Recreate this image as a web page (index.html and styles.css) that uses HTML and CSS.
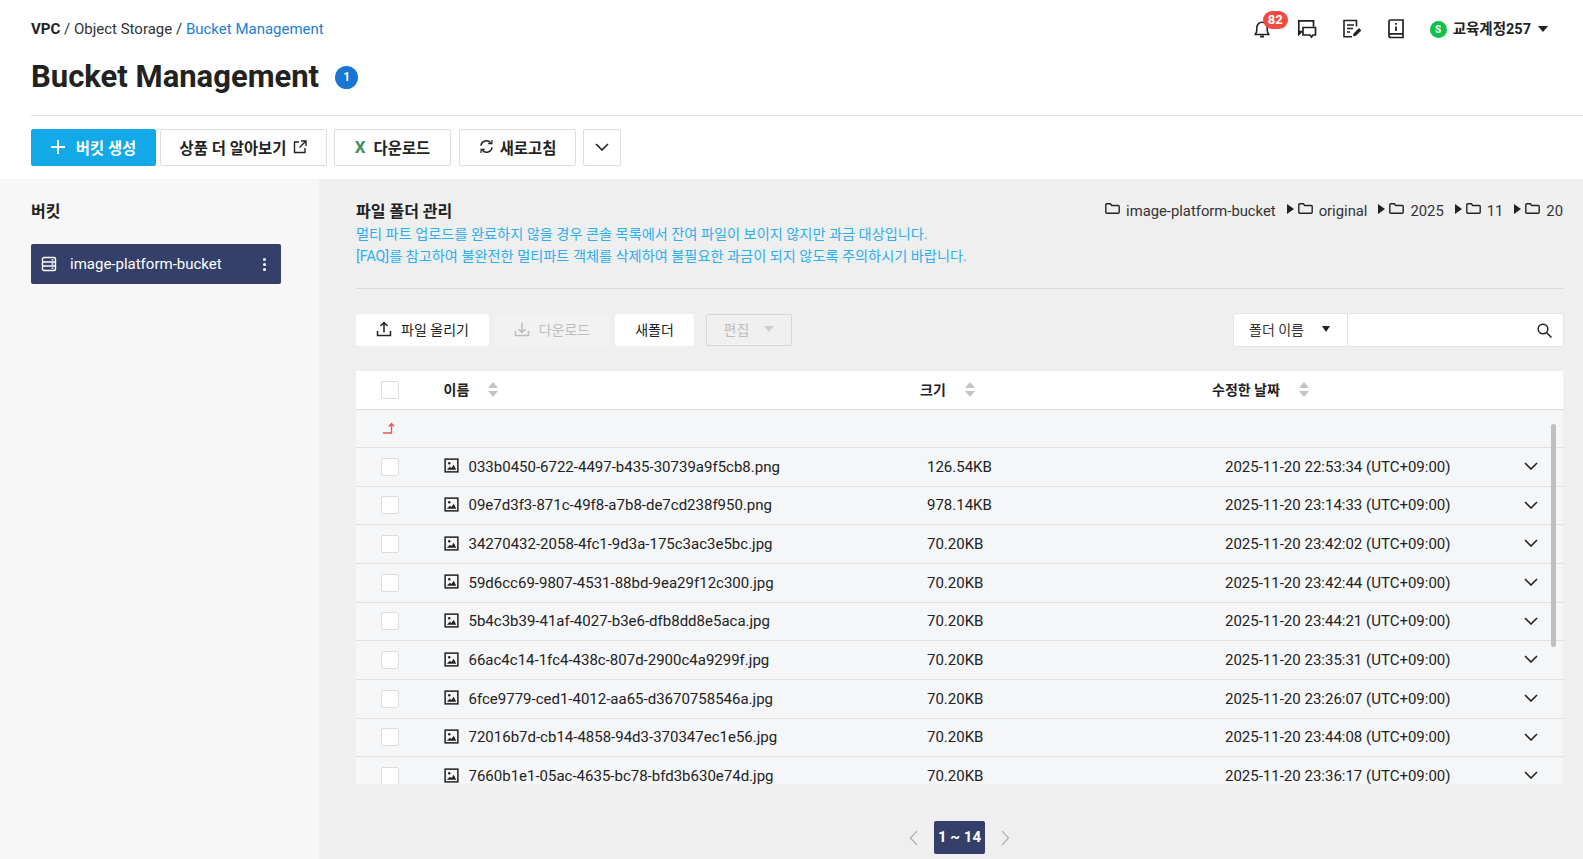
FILE: index.html
```html
<!DOCTYPE html>
<html lang="ko">
<head>
    <meta charset="UTF-8">
    <title>Bucket Management</title>
    <link rel="stylesheet" href="styles.css">
</head>
<body>
    <!-- icon sprite -->
    <svg class="sprite" width="0" height="0">
        <symbol id="i-folder" viewBox="0 0 15 12"><path d="M.8 1.800c0-.6.4-1 1-1h3.600l1.300 1.700h6.500c.6 0 1 .4 1 1v5.700c0 .6-.4 1-1 1H1.800c-.6 0-1-.4-1-1z" fill="none" stroke="currentColor" stroke-width="1.400"/></symbol>
        <symbol id="i-image" viewBox="0 0 16 16"><rect x="1.200" y="1.200" width="13.600" height="13.600" fill="none" stroke="currentColor" stroke-width="1.600"/><circle cx="5.600" cy="5.600" r="1.300" fill="currentColor"/><path d="M3 12.600l3.200-3.400 1.700 1.500 2.500-3.400 2.600 5.300z" fill="currentColor"/></symbol>
        <symbol id="i-chev" viewBox="0 0 14 8"><path d="M1 1l6 6 6-6" fill="none" stroke="currentColor" stroke-width="1.600"/></symbol>
        <symbol id="i-sort" viewBox="0 0 10 15"><path d="M5 0l5 6H0zM5 15L0 9h10z" fill="currentColor"/></symbol>
    </svg>

    <header class="page-head">
        <div class="top-row">
            <nav class="crumbs"><b>VPC</b> / Object Storage / <span class="crumb-on">Bucket Management</span></nav>
            <div class="user-tools">
                <span class="tool tool-bell">
                    <svg width="20" height="20" viewBox="0 0 20 20"><path d="M3 15.500c1.200-1 1.800-2.200 1.800-4.500V8.500a5.200 5.200 0 0 1 10.400 0V11c0 2.300.6 3.500 1.800 4.500z" fill="none" stroke="#222" stroke-width="1.600" stroke-linejoin="round"/><path d="M8 17.500h4" stroke="#222" stroke-width="2"/></svg>
                    <span class="bell-count">82</span>
                </span>
                <span class="tool">
                    <svg width="20" height="20" viewBox="0 0 20 20"><path d="M5 12.500H1.800V1.800h14.700v6" fill="none" stroke="#222" stroke-width="1.700"/><path d="M6 8.500h12.500v7.500h-2.500l-1.500 2-1.500-2H6zM1.800 12.500v3l3-3" fill="none" stroke="#222" stroke-width="1.700"/></svg>
                </span>
                <span class="tool">
                    <svg width="20" height="20" viewBox="0 0 20 20"><path d="M10 17.800H2V1.500h12.500v6" fill="none" stroke="#222" stroke-width="1.600"/><path d="M5 6h7M5 9.500h6M5 13h3" stroke="#222" stroke-width="1.500"/><path d="M11 17.500l.6-3 5.400-5.400 2.300 2.300-5.400 5.400z" fill="#222"/></svg>
                </span>
                <span class="tool">
                    <svg width="16" height="20" viewBox="0 0 16 20"><path d="M1 16.500V2.500C1 1.600 1.600 1 2.500 1H15v17.500H2.800C1.700 18.500 1 17.600 1 16.500c0-1 .7-1.700 1.800-1.700H15" fill="none" stroke="#222" stroke-width="1.700"/><path d="M8 4v1.800M8 7.500V12" stroke="#222" stroke-width="1.800"/></svg>
                </span>
                <span class="user">
                    <span class="avatar">S</span>
                    <span class="user-name">교육계정257</span>
                    <span class="caret"></span>
                </span>
            </div>
        </div>
        <div class="title-row">
            <h1>Bucket Management</h1>
            <span class="title-badge">1</span>
        </div>
        <div class="actions">
            <button class="btn btn-main">
                <svg width="14" height="14" viewBox="0 0 14 14"><path d="M7 0v14M0 7h14" stroke="#fff" stroke-width="2"/></svg>
                버킷 생성
            </button>
            <button class="btn btn-more">
                상품 더 알아보기
                <svg width="14" height="14" viewBox="0 0 14 14"><path d="M6 2H1.500v10.500H12V8M8 1h5v5M13 1L6.500 7.500" fill="none" stroke="#222" stroke-width="1.400"/></svg>
            </button>
            <button class="btn btn-down"><span class="x-mark">X</span>다운로드</button>
            <button class="btn btn-reload">
                <svg width="15" height="15" viewBox="0 0 16 16"><path d="M2 7a6 6 0 0 1 10.500-3M14 9a6 6 0 0 1-10.500 3" fill="none" stroke="#222" stroke-width="1.500"/><path d="M13.800 1v4h-4M2.200 15v-4h4" fill="none" stroke="#222" stroke-width="1.300"/></svg>
                새로고침
            </button>
            <button class="btn btn-open"><svg width="14" height="8"><use href="#i-chev"/></svg></button>
        </div>
    </header>

    <div class="content">
        <aside class="side">
            <h2>버킷</h2>
            <div class="bucket">
                <svg width="16" height="16" viewBox="0 0 16 16"><rect x="1.500" y="1.500" width="13" height="13" rx="1.500" fill="none" stroke="#fff" stroke-width="1.400"/><path d="M1.500 6h13M1.500 10h13M10.500 3.800h2M10.500 8h2M10.500 12.200h2" stroke="#fff" stroke-width="1.300"/></svg>
                <span class="bucket-name">image-platform-bucket</span>
                <span class="dots"><i></i><i></i><i></i></span>
            </div>
        </aside>

        <main class="main">
            <div class="main-head">
                <div>
                    <h2>파일 폴더 관리</h2>
                    <p class="notice">멀티 파트 업로드를 완료하지 않을 경우 콘솔 목록에서 잔여 파일이 보이지 않지만 과금 대상입니다.<br>[FAQ]를 참고하여 불완전한 멀티파트 객체를 삭제하여 불필요한 과금이 되지 않도록 주의하시기 바랍니다.</p>
                </div>
                <div class="path">
                    <span class="path-item"><svg width="15" height="12"><use href="#i-folder"/></svg>image-platform-bucket</span>
                    <span class="path-arrow"></span>
                    <span class="path-item"><svg width="15" height="12"><use href="#i-folder"/></svg>original</span>
                    <span class="path-arrow"></span>
                    <span class="path-item"><svg width="15" height="12"><use href="#i-folder"/></svg>2025</span>
                    <span class="path-arrow"></span>
                    <span class="path-item"><svg width="15" height="12"><use href="#i-folder"/></svg>11</span>
                    <span class="path-arrow"></span>
                    <span class="path-item"><svg width="15" height="12"><use href="#i-folder"/></svg>20</span>
                </div>
            </div>

            <div class="file-bar">
                <button class="fbtn fbtn-up">
                    <svg width="16" height="16" viewBox="0 0 16 16"><path d="M1.500 10v4.500h13V10M8 11.500V2M4.500 5L8 1.500 11.500 5" fill="none" stroke="#222" stroke-width="1.500"/></svg>
                    파일 올리기
                </button>
                <button class="fbtn fbtn-off">
                    <svg width="16" height="16" viewBox="0 0 16 16"><path d="M1.500 10v4.500h13V10M8 1.500V11M4.500 8L8 11.500 11.500 8" fill="none" stroke="#bdbdbd" stroke-width="1.500"/></svg>
                    다운로드
                </button>
                <button class="fbtn fbtn-new">새폴더</button>
                <button class="fbtn-edit">편집<span class="caret caret-off"></span></button>
                <div class="search">
                    <span class="search-type">폴더 이름<span class="caret"></span></span>
                    <span class="search-box">
                        <svg width="15" height="15" viewBox="0 0 15 15"><circle cx="6" cy="6" r="4.800" fill="none" stroke="#222" stroke-width="1.500"/><path d="M9.500 9.500L14.500 14.500" stroke="#222" stroke-width="1.500"/></svg>
                    </span>
                </div>
            </div>

            <div class="table">
                <div class="row row-head">
                    <span class="check"></span>
                    <span class="th">이름<svg width="10" height="15"><use href="#i-sort"/></svg></span>
                    <span class="th">크기<svg width="10" height="15"><use href="#i-sort"/></svg></span>
                    <span class="th">수정한 날짜<svg width="10" height="15"><use href="#i-sort"/></svg></span>
                </div>
                <div class="table-body">
                    <div class="row row-up">
                        <svg class="up-icon" width="12" height="12" viewBox="0 0 12 12"><path d="M0 11h8.500V2M6 4.500L8.500 1.500 11 4.500" fill="none" stroke="#f0524a" stroke-width="1.300"/></svg>
                    </div>
                    <div class="row">
                        <span class="check"></span>
                        <span class="file"><svg width="15" height="15"><use href="#i-image"/></svg>033b0450-6722-4497-b435-30739a9f5cb8.png</span>
                        <span class="size">126.54KB</span>
                        <span class="date">2025-11-20 22:53:34 (UTC+09:00)</span>
                        <svg class="row-open" width="14" height="8"><use href="#i-chev"/></svg>
                    </div>
                    <div class="row">
                        <span class="check"></span>
                        <span class="file"><svg width="15" height="15"><use href="#i-image"/></svg>09e7d3f3-871c-49f8-a7b8-de7cd238f950.png</span>
                        <span class="size">978.14KB</span>
                        <span class="date">2025-11-20 23:14:33 (UTC+09:00)</span>
                        <svg class="row-open" width="14" height="8"><use href="#i-chev"/></svg>
                    </div>
                    <div class="row">
                        <span class="check"></span>
                        <span class="file"><svg width="15" height="15"><use href="#i-image"/></svg>34270432-2058-4fc1-9d3a-175c3ac3e5bc.jpg</span>
                        <span class="size">70.20KB</span>
                        <span class="date">2025-11-20 23:42:02 (UTC+09:00)</span>
                        <svg class="row-open" width="14" height="8"><use href="#i-chev"/></svg>
                    </div>
                    <div class="row">
                        <span class="check"></span>
                        <span class="file"><svg width="15" height="15"><use href="#i-image"/></svg>59d6cc69-9807-4531-88bd-9ea29f12c300.jpg</span>
                        <span class="size">70.20KB</span>
                        <span class="date">2025-11-20 23:42:44 (UTC+09:00)</span>
                        <svg class="row-open" width="14" height="8"><use href="#i-chev"/></svg>
                    </div>
                    <div class="row">
                        <span class="check"></span>
                        <span class="file"><svg width="15" height="15"><use href="#i-image"/></svg>5b4c3b39-41af-4027-b3e6-dfb8dd8e5aca.jpg</span>
                        <span class="size">70.20KB</span>
                        <span class="date">2025-11-20 23:44:21 (UTC+09:00)</span>
                        <svg class="row-open" width="14" height="8"><use href="#i-chev"/></svg>
                    </div>
                    <div class="row">
                        <span class="check"></span>
                        <span class="file"><svg width="15" height="15"><use href="#i-image"/></svg>66ac4c14-1fc4-438c-807d-2900c4a9299f.jpg</span>
                        <span class="size">70.20KB</span>
                        <span class="date">2025-11-20 23:35:31 (UTC+09:00)</span>
                        <svg class="row-open" width="14" height="8"><use href="#i-chev"/></svg>
                    </div>
                    <div class="row">
                        <span class="check"></span>
                        <span class="file"><svg width="15" height="15"><use href="#i-image"/></svg>6fce9779-ced1-4012-aa65-d3670758546a.jpg</span>
                        <span class="size">70.20KB</span>
                        <span class="date">2025-11-20 23:26:07 (UTC+09:00)</span>
                        <svg class="row-open" width="14" height="8"><use href="#i-chev"/></svg>
                    </div>
                    <div class="row">
                        <span class="check"></span>
                        <span class="file"><svg width="15" height="15"><use href="#i-image"/></svg>72016b7d-cb14-4858-94d3-370347ec1e56.jpg</span>
                        <span class="size">70.20KB</span>
                        <span class="date">2025-11-20 23:44:08 (UTC+09:00)</span>
                        <svg class="row-open" width="14" height="8"><use href="#i-chev"/></svg>
                    </div>
                    <div class="row">
                        <span class="check"></span>
                        <span class="file"><svg width="15" height="15"><use href="#i-image"/></svg>7660b1e1-05ac-4635-bc78-bfd3b630e74d.jpg</span>
                        <span class="size">70.20KB</span>
                        <span class="date">2025-11-20 23:36:17 (UTC+09:00)</span>
                        <svg class="row-open" width="14" height="8"><use href="#i-chev"/></svg>
                    </div>
                    <span class="scroll-thumb"></span>
                </div>
            </div>

            <div class="pager">
                <svg width="9" height="16" viewBox="0 0 9 16"><path d="M8 1L1.500 8 8 15" fill="none" stroke="#b5b5b5" stroke-width="1.400"/></svg>
                <span class="page-on">1 ~ 14</span>
                <svg width="9" height="16" viewBox="0 0 9 16"><path d="M1 1l6.500 7L1 15" fill="none" stroke="#b5b5b5" stroke-width="1.400"/></svg>
            </div>
        </main>
    </div>
</body>
</html>
```

FILE: styles.css
```css
* {
    box-sizing: border-box;
}

html, body {
    height: 100%;
}

body {
    margin: 0;
    display: flex;
    flex-direction: column;
    overflow: hidden;
    background-color: #fff;
    color: #222;
    font-family: Roboto, "Noto Sans CJK KR", sans-serif;
    font-size: 14px;
}

button {
    font-family: inherit;
    cursor: pointer;
}

.sprite {
    display: block;
    height: 0;
}

/* Sayfa basligi */
.page-head {
    height: 179px;
    padding: 12px 0 0 31px;
}

.top-row {
    display: flex;
    justify-content: space-between;
    align-items: center;
    height: 34px;
    padding-right: 35px;
}

.crumbs {
    font-size: 15px;
    color: #333;
}

.crumbs b {
    font-weight: 700;
    color: #222;
}

.crumb-on {
    color: #1c7ed6;
}

.user-tools {
    display: flex;
    align-items: center;
}

.tool {
    position: relative;
    display: flex;
    justify-content: center;
    width: 24px;
    margin-right: 20.5px;
}

.tool-bell svg {
    margin-left: -2px;
}

.bell-count {
    position: absolute;
    left: 12px;
    top: -8px;
    width: 25px;
    height: 18px;
    border-radius: 9px;
    background-color: #f44a40;
    color: #fff;
    font-size: 13px;
    font-weight: 700;
    line-height: 18px;
    text-align: center;
}

.user {
    display: flex;
    align-items: center;
    margin-left: 1px;
}

.avatar {
    width: 17px;
    height: 17px;
    margin-right: 6px;
    border-radius: 50%;
    background-color: #0cc24a;
    color: #fff;
    font-size: 10px;
    font-weight: 700;
    line-height: 17px;
    text-align: center;
}

.user-name {
    padding-bottom: 3px;
    font-size: 14.5px;
    font-weight: 700;
}

.caret {
    display: inline-block;
    margin-left: 7px;
    border-top: 6px solid #222;
    border-left: 5px solid transparent;
    border-right: 5px solid transparent;
}

.title-row {
    display: flex;
    align-items: center;
    height: 46px;
    padding-bottom: 1px;
    margin-top: 8px;
}

h1 {
    margin: 0;
    font-size: 31px;
    font-weight: 700;
}

.title-badge {
    width: 23px;
    height: 23px;
    margin-top: 1px;
    margin-left: 16px;
    border-radius: 50%;
    background-color: #1976d2;
    color: #fff;
    font-size: 12px;
    font-weight: 700;
    line-height: 23px;
    text-align: center;
}

.actions {
    display: flex;
    gap: 7px;
    margin-top: 15px;
    padding-top: 13px;
    border-top: 1px solid #e2e2e2;
}

.btn {
    display: flex;
    align-items: center;
    justify-content: center;
    gap: 7px;
    height: 37px;
    padding: 0 0 2px;
    border: 1px solid #ddd;
    border-radius: 2px;
    background-color: #fff;
    color: #222;
    font-size: 15.4px;
    font-weight: 700;
}

.btn-main {
    width: 125px;
    margin-right: -3px;
    gap: 11px;
    border-color: #13a9e8;
    background-color: #13a9e8;
    color: #fff;
}

.btn-more {
    width: 167px;
}

.btn-down {
    width: 117px;
    gap: 8px;
}

.x-mark {
    color: #3f8f5f;
    font-size: 17px;
    font-weight: 700;
}

.btn-reload {
    width: 117px;
    margin-left: 1px;
    gap: 6px;
}

.btn-open {
    width: 38px;
}

/* Alt bolum */
.content {
    flex: 1;
    display: flex;
    min-height: 0;
}

.side {
    width: 319px;
    padding: 22px 38px 0 31px;
    background-color: #f7f7f7;
}

h2 {
    margin: 0;
    font-size: 16px;
    font-weight: 700;
    line-height: 22px;
}

.bucket {
    display: flex;
    align-items: center;
    height: 40px;
    margin-top: 21px;
    padding: 0 15px 0 10px;
    border-radius: 2px;
    background-color: #344069;
    color: #fff;
    font-size: 15px;
}

.bucket-name {
    flex: 1;
    margin-left: 13px;
}

.dots {
    display: flex;
    flex-direction: column;
    gap: 2px;
}

.dots i {
    width: 3px;
    height: 3px;
    border-radius: 50%;
    background-color: #fff;
}

.main {
    flex: 1;
    min-width: 0;
    padding: 22px 20px 0 37px;
    background-color: #efefef;
}

.main-head {
    display: flex;
    justify-content: space-between;
    align-items: flex-start;
    height: 88px;
    border-bottom: 1px solid #d9d9d9;
}

.notice {
    margin: 0;
    color: #2aaef0;
    font-size: 14.2px;
    line-height: 22px;
}

.path {
    display: flex;
    align-items: center;
    height: 20px;
    color: #333;
    font-size: 14.8px;
}

.path-item {
    display: flex;
    align-items: center;
    gap: 6px;
}

.path-item svg {
    margin-bottom: 5px;
    color: #222;
}

.path-arrow {
    margin: 0 4px 5px 11px;
    border-left: 7px solid #222;
    border-top: 5px solid transparent;
    border-bottom: 5px solid transparent;
}

.file-bar {
    display: flex;
    align-items: center;
    height: 32px;
    margin-top: 25px;
    gap: 5px;
}

.fbtn {
    display: flex;
    align-items: center;
    justify-content: center;
    gap: 9px;
    height: 32px;
    padding: 0 0 2px;
    border: 0;
    border-radius: 3px;
    background-color: #fff;
    color: #222;
    font-size: 14px;
}

.fbtn-up {
    width: 133px;
}

.fbtn-off {
    width: 116px;
    background-color: #f2f2f2;
    color: #bdbdbd;
}

.fbtn-new {
    width: 79px;
}

.fbtn-edit {
    display: flex;
    align-items: center;
    justify-content: center;
    width: 86px;
    height: 32px;
    padding: 0 0 2px;
    margin-left: 7px;
    border: 1px solid #d5d7db;
    border-radius: 2px;
    background-color: #f0f0f0;
    color: #bdbdbd;
    font-size: 14px;
}

.caret-off {
    margin-left: 15px;
    border-top-color: #cfcfcf;
}

.search {
    display: flex;
    width: 329px;
    height: 32px;
    margin-left: auto;
    border-radius: 2px;
    background-color: #fff;
    box-shadow: 0 0 0 1px #e6e6e6;
}

.search-type {
    display: flex;
    align-items: center;
    justify-content: space-between;
    width: 114px;
    padding: 0 17px 2px 15px;
    border-right: 1px solid #e3e3e3;
    color: #333;
    font-size: 14px;
}

.search-type .caret {
    border-left-width: 4.5px;
    border-right-width: 4.5px;
}

.search-box {
    flex: 1;
    display: flex;
    align-items: center;
    justify-content: flex-end;
    padding-right: 11px;
}

/* Dosya tablosu */
.table {
    margin-top: 25px;
    background-color: #f5f6f8;
}

.row {
    display: grid;
    grid-template-columns: 88px 476px 292px 1fr;
    align-items: center;
    height: 38.67px;
    border-bottom: 1px solid #dfdfdf;
    position: relative;
    font-size: 15px;
}

.row-head {
    grid-template-columns: 87.5px 476.5px 292px 1fr;
    height: 39px;
    background-color: #fff;
    border-bottom: 1px solid #d9d9d9;
    font-size: 14px;
}

.row-up {
    height: 38px;
}

.check {
    width: 18px;
    height: 18px;
    margin-left: 25px;
    border: 1px solid #dcdcdc;
    border-radius: 2px;
    background-color: #fff;
}

.th {
    display: flex;
    align-items: center;
    gap: 19px;
    padding-bottom: 2px;
    font-weight: 700;
    color: #222;
}

.th svg {
    color: #c4c4c4;
}

.table-body {
    position: relative;
    height: 374px;
    overflow: hidden;
}

.up-icon {
    margin: 0 0 2px 27px;
}

.file {
    display: flex;
    align-items: center;
    gap: 9.5px;
}

.file svg {
    margin-bottom: 2px;
}

.size {
    padding-left: 7px;
}

.date {
    padding-left: 13px;
}

.row-open {
    position: absolute;
    right: 25px;
    top: 14px;
}

.scroll-thumb {
    position: absolute;
    right: 7px;
    top: 14px;
    width: 5px;
    height: 223px;
    border-radius: 3px;
    background-color: #bfbfbf;
}

.pager {
    display: flex;
    align-items: center;
    justify-content: center;
    gap: 16px;
    margin-top: 37px;
}

.page-on {
    width: 51px;
    height: 33px;
    border-radius: 2px;
    background-color: #344069;
    color: #fff;
    font-size: 15px;
    font-weight: 700;
    line-height: 33px;
    text-align: center;
}
```
